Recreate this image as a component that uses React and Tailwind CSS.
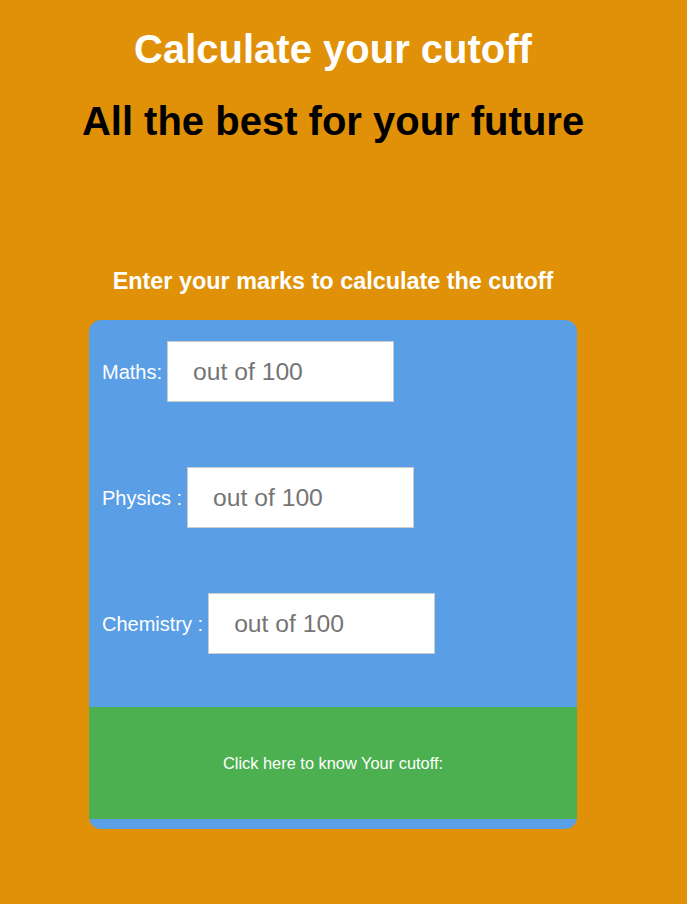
import React from 'react';

const subjects = [
  { label: 'Maths:', name: 'maths' },
  { label: 'Physics :', name: 'physics' },
  { label: 'Chemistry :', name: 'chemistry' },
];

export default function App() {
  return (
    <div className="min-h-[904px] bg-[#e09108] font-['Liberation_Sans',Arial,sans-serif]">
      <div className="w-[666px] flex flex-col items-center pt-[26px]">
        <h1 className="text-[40px] leading-[46px] font-bold text-white">Calculate your cutoff</h1>
        <h1 className="mt-[26px] text-[40px] leading-[46px] font-bold text-black">All the best for your future</h1>

        <h3 className="mt-[124px] text-[23.4px] leading-[27px] font-bold text-white">
          Enter your marks to calculate the cutoff
        </h3>

        {/* Marks form */}
        <form className="mt-[25px] w-[488px] bg-[#5a9ee5] rounded-[12px] pt-[21px] pb-[10px] overflow-hidden">
          <div className="flex flex-col gap-[65px] pl-[13px]">
            {subjects.map((s) => (
              <div key={s.name} className="flex items-center gap-[5px]">
                <label className="text-[20px] text-white">{s.label}</label>
                <input
                  type="text"
                  name={s.name}
                  placeholder="out of 100"
                  className="w-[227px] h-[61px] bg-white border border-[#cccccc] pl-[25px] text-[24.7px] text-[#333] placeholder:text-[#757575] outline-none"
                />
              </div>
            ))}
          </div>
          <button
            type="button"
            className="mt-[53px] w-full h-[112px] bg-[#4caf50] text-white text-[16.4px]"
          >
            Click here to know Your cutoff:
          </button>
        </form>
      </div>
    </div>
  );
}
